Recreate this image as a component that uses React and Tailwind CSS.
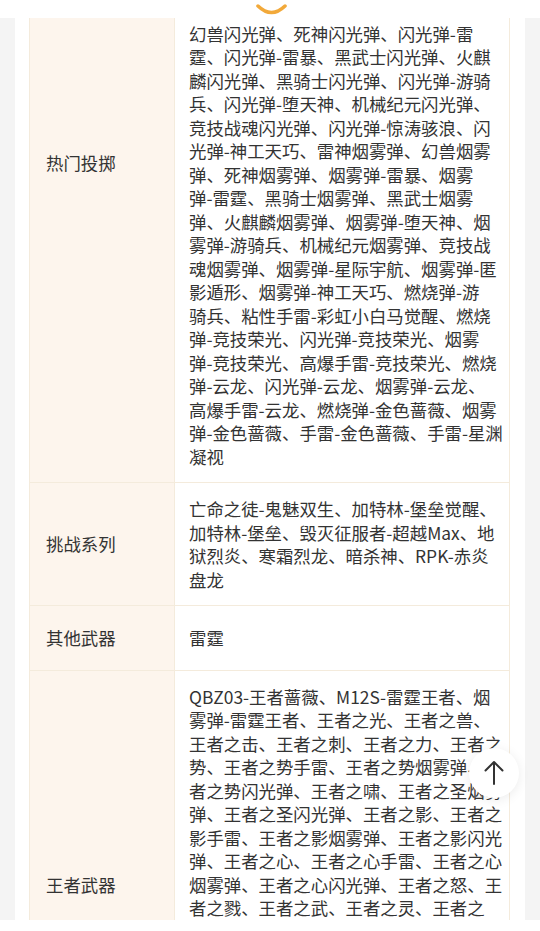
import React from "react";

const hot = [
  "幻兽闪光弹、死神闪光弹、闪光弹-雷",
  "霆、闪光弹-雷暴、黑武士闪光弹、火麒",
  "麟闪光弹、黑骑士闪光弹、闪光弹-游骑",
  "兵、闪光弹-堕天神、机械纪元闪光弹、",
  "竞技战魂闪光弹、闪光弹-惊涛骇浪、闪",
  "光弹-神工天巧、雷神烟雾弹、幻兽烟雾",
  "弹、死神烟雾弹、烟雾弹-雷暴、烟雾",
  "弹-雷霆、黑骑士烟雾弹、黑武士烟雾",
  "弹、火麒麟烟雾弹、烟雾弹-堕天神、烟",
  "雾弹-游骑兵、机械纪元烟雾弹、竞技战",
  "魂烟雾弹、烟雾弹-星际宇航、烟雾弹-匿",
  "影遁形、烟雾弹-神工天巧、燃烧弹-游",
  "骑兵、粘性手雷-彩虹小白马觉醒、燃烧",
  "弹-竞技荣光、闪光弹-竞技荣光、烟雾",
  "弹-竞技荣光、高爆手雷-竞技荣光、燃烧",
  "弹-云龙、闪光弹-云龙、烟雾弹-云龙、",
  "高爆手雷-云龙、燃烧弹-金色蔷薇、烟雾",
  "弹-金色蔷薇、手雷-金色蔷薇、手雷-星渊",
  "凝视",
];

const challenge = [
  "亡命之徒-鬼魅双生、加特林-堡垒觉醒、",
  "加特林-堡垒、毁灭征服者-超越Max、地",
  "狱烈炎、寒霜烈龙、暗杀神、RPK-赤炎",
  "盘龙",
];

const king = [
  "QBZ03-王者蔷薇、M12S-雷霆王者、烟",
  "雾弹-雷霆王者、王者之光、王者之兽、",
  "王者之击、王者之刺、王者之力、王者之",
  "势、王者之势手雷、王者之势烟雾弹、王",
  "者之势闪光弹、王者之啸、王者之圣烟雾",
  "弹、王者之圣闪光弹、王者之影、王者之",
  "影手雷、王者之影烟雾弹、王者之影闪光",
  "弹、王者之心、王者之心手雷、王者之心",
  "烟雾弹、王者之心闪光弹、王者之怒、王",
  "者之戮、王者之武、王者之灵、王者之",
];

// rows run past the screen: 7 lines of row 1 sit above the top, 7 lines of
// the last row below the bottom, so the labels stay centred like the page
const rows = [
  { label: "热门投掷", lines: hot, before: true },
  { label: "挑战系列", lines: challenge },
  { label: "其他武器", lines: ["雷霆"] },
  { label: "王者武器", lines: king, after: true },
];

const Row = ({ label, lines, before, after }) => (
  <div className="flex border-b border-[#f4ebdc]">
    <div className="w-[145px] shrink-0 flex items-center bg-[#fdf5ed] border-r border-[#f4ebdc] pl-[16px] py-[20px]">
      {label}
    </div>
    <div className="flex-1 flex items-center pl-[14px] py-[14px] bg-white">
      <div>
        {before && <div className="h-[164.5px]" />}
        {lines.map((line, i) => (
          <div key={i} className="whitespace-nowrap h-[23.5px]">
            {line}
          </div>
        ))}
        {after && <div className="h-[164.5px]" />}
      </div>
    </div>
  </div>
);

const App = () => {
  return (
    <div className="relative w-full h-[931px] flex flex-col bg-[#f4f4f4] font-['Noto_Sans_CJK_SC','Noto_Sans',sans-serif] text-[17.4px] leading-[23.5px] text-[#333333]">
      {/* pull-down loader strip */}
      <div className="relative h-[18px] shrink-0 bg-white">
        <svg
          className="absolute left-[255px] top-0"
          width="33"
          height="18"
          viewBox="0 0 33 18"
        >
          <path
            d="M3 6 Q16.5 19 30 6"
            fill="none"
            stroke="#f2a93a"
            strokeWidth="3.5"
            strokeLinecap="round"
          />
        </svg>
      </div>

      {/* scrolled content viewport */}
      <div className="flex-1 min-h-0 overflow-hidden">
        <div className="mx-[15px] -mt-[176px] bg-white pl-[14px] pr-[15px]">
          <div className="border border-[#f4ebdc]">
            {rows.map((r) => (
              <Row key={r.label} {...r} />
            ))}
          </div>
        </div>
      </div>

      <div className="h-[11px] shrink-0 bg-white" />

      {/* back to top */}
      <button className="absolute left-[469px] top-[748px] w-[50px] h-[50px] rounded-full bg-white shadow-[0_2px_12px_rgba(0,0,0,0.08)] flex items-center justify-center">
        <svg width="26" height="28" viewBox="0 0 26 28" fill="none">
          <path
            d="M13 3 V25 M4.5 11.5 L13 3 L21.5 11.5"
            stroke="#333333"
            strokeWidth="2"
            strokeLinecap="round"
            strokeLinejoin="round"
          />
        </svg>
      </button>
    </div>
  );
};

export default App;
